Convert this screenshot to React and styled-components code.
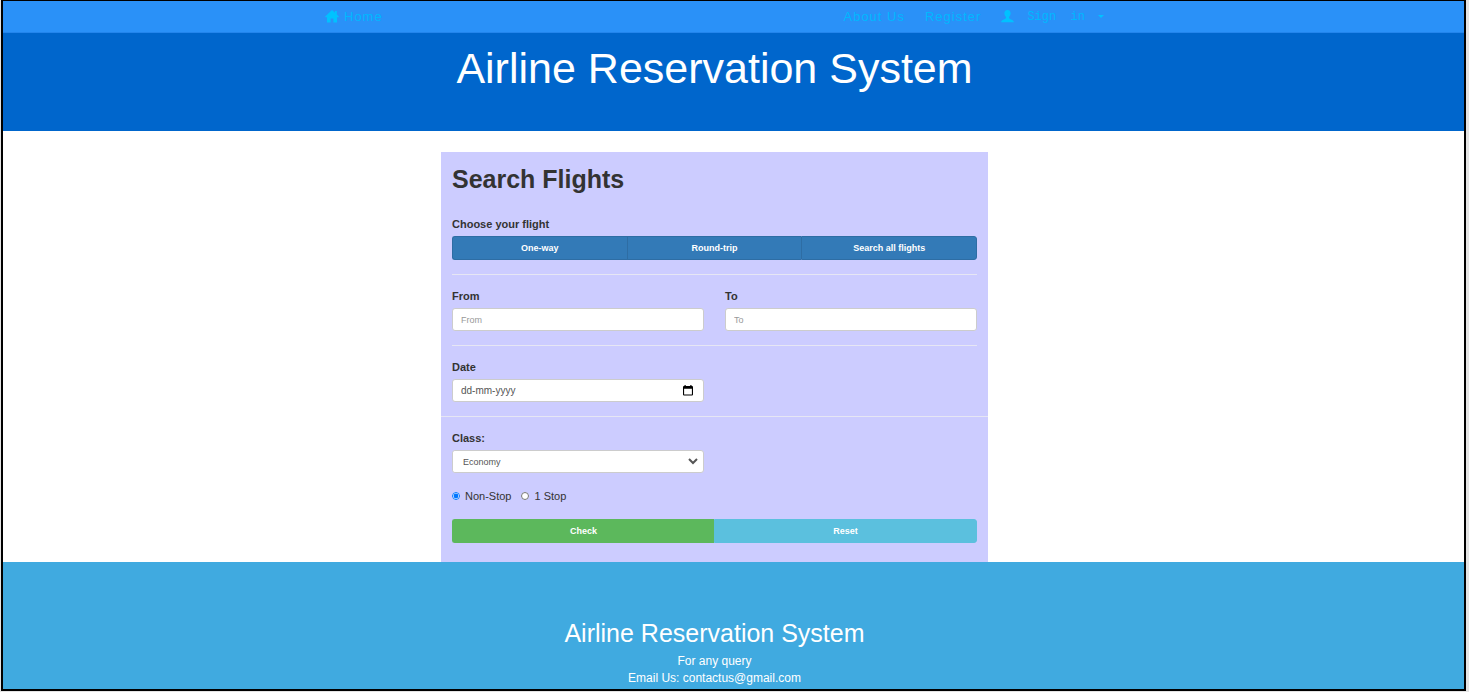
import React from "react";
import styled, { createGlobalStyle } from "styled-components";

const GlobalStyle = createGlobalStyle`
  *, *::before, *::after { box-sizing: border-box; }
  body {
    margin: 0;
    background: #e4e4e4;
    color: #333;
    font-family: "Liberation Sans", Arial, Helvetica, sans-serif;
    font-size: 11px;
  }
  h1, h2, p, fieldset { margin: 0; padding: 0; border: 0; }
  button, input, select { font-family: inherit; margin: 0; }
`;

const Page = styled.div`
  display: flex;
  flex-direction: column;
  min-height: calc(100vh - 1px);
  margin: 0 3px 1px 1px;
  border: 2px solid #000;
  border-top-width: 1px;
  background: #fff;
`;

const NavBar = styled.nav`
  padding-right: 38px;
  background: #2a91f8;
  border-bottom: 1px solid #2385ec;
`;

const NavInner = styled.div`
  display: flex;
  justify-content: space-between;
  max-width: 779px;
  margin: 0 auto;
`;

const NavGroup = styled.div`
  display: flex;
  gap: 20px;
`;

const NavLink = styled.a`
  display: flex;
  align-items: center;
  gap: 5px;
  height: 31px;
  color: #00b8ff;
  font-size: 13px;
  letter-spacing: 1px;
  text-decoration: none;
  svg { fill: #00c2ff; }
`;

const SignInLink = styled(NavLink)`
  gap: 13px;
  font-family: "Liberation Mono", monospace;
  font-size: 12px;
  letter-spacing: 0;
  white-space: pre;
`;

const Banner = styled.header`
  padding: 11px 38px 39px 0;
  background: #0066cc;
  color: #fff;
  text-align: center;
`;

const BannerTitle = styled.h1`
  font-size: 43px;
  font-weight: 400;
  line-height: 48px;
`;

const Main = styled.main`
  padding: 21px 38px 0 0;
`;

const SearchForm = styled.form`
  max-width: 547px;
  margin: 0 auto;
  padding: 13px 0 19px;
  background: #ccccff;
`;

const FormTitle = styled.h2`
  padding: 0 11px;
  margin-bottom: 10px;
  font-size: 25px;
  line-height: 28px;
`;

const Section = styled.div`
  padding: 14px 11px;
`;

const Divider = styled.hr`
  height: 1px;
  margin: ${(p) => (p.$full ? "0" : "0 11px")};
  border: 0;
  background: #e6e6f4;
`;

const Columns = styled.div`
  display: grid;
  grid-template-columns: 1fr 1fr;
  column-gap: 21px;
`;

const Label = styled.label`
  display: block;
  margin-bottom: 5px;
  font-size: 11px;
  font-weight: 700;
  line-height: 14px;
`;

const ButtonGroup = styled.div`
  display: flex;
`;

const tones = {
  primary: ["#337ab7", "#2e6da4"],
  success: ["#5cb85c", "#5cb85c"],
  info: ["#5bc0de", "#5bc0de"],
};

const GroupButton = styled.button`
  flex: 1 1 0;
  height: 24px;
  padding: 0 4px;
  border: 1px solid ${(p) => tones[p.$tone][1]};
  background: ${(p) => tones[p.$tone][0]};
  color: #fff;
  font-size: 9px;
  font-weight: 700;
  &:first-child { border-radius: 3px 0 0 3px; }
  &:last-child { border-radius: 0 3px 3px 0; }
  &:not(:last-child) { border-right-width: 0; }
`;

const Control = styled.div`
  display: flex;
  align-items: center;
  height: 23px;
  border: 1px solid #ccc;
  border-radius: 3px;
  background: #fff;
`;

const TextInput = styled.input`
  flex: 1;
  min-width: 0;
  height: 100%;
  padding: 0 8px;
  border: 0;
  background: none;
  color: #555;
  font-size: ${(p) => (p.$date ? "10px" : "9px")};
  outline: 0;
  &::placeholder { color: ${(p) => (p.$date ? "#555" : "#999")}; opacity: 1; }
`;

const PickerButton = styled.button`
  display: flex;
  padding: 0 10px;
  border: 0;
  background: none;
`;

const SelectControl = styled(Control)`
  padding-right: 2px;
`;

const ClassSelect = styled.select`
  flex: 1;
  min-width: 0;
  height: 100%;
  padding: 0 0 0 6px;
  border: 0;
  border-radius: 3px;
  background: #fff;
  color: #555;
  font-size: 9px;
`;

const RadioRow = styled.fieldset`
  display: flex;
  gap: 10px;
  margin: 15px 0;
`;

const RadioLabel = styled.label`
  display: flex;
  align-items: center;
  gap: 5px;
  line-height: 16px;
  input { width: 8px; height: 8px; }
`;

const LastSection = styled(Section)`
  padding-bottom: 0;
`;

const Footer = styled.footer`
  flex: 1;
  padding: 57px 38px 1px 0;
  background: #40aae0;
  color: #fff;
  text-align: center;
  font-size: 12px;
  line-height: 17px;
`;

const FooterTitle = styled.h2`
  margin-bottom: 6px;
  font-size: 25px;
  font-weight: 400;
  line-height: 28px;
`;

const HomeIcon = () => (
  <svg width="14" height="13" viewBox="0 0 14 13" aria-hidden="true">
    <path d="M7 0 L10 2.8 V1 H11.8 V4.5 L14 6.7 L13.6 7.2 H12 V12.4 H8.4 V8.6 H5.6 V12.4 H2 V7.2 H0.4 L0 6.7 Z" />
  </svg>
);

const UserIcon = () => (
  <svg width="13" height="13" viewBox="0 0 13 13" aria-hidden="true">
    <path d="M6.5 0 C8.6 0 9.8 1.5 9.6 3.6 C9.5 5.2 8.9 6.3 8 7 C7.9 8.2 8.2 8.7 9.4 9.2 C11.6 10 12.8 10.4 12.9 12.3 H0.1 C0.2 10.4 1.4 10 3.6 9.2 C4.8 8.7 5.1 8.2 5 7 C4.1 6.3 3.5 5.2 3.4 3.6 C3.2 1.5 4.4 0 6.5 0 Z" />
  </svg>
);

const Caret = () => (
  <svg width="6" height="3" viewBox="0 0 6 3" aria-hidden="true">
    <path d="M0 0 H6 L3 3 Z" />
  </svg>
);

const CalendarIcon = () => (
  <svg width="10" height="11" viewBox="0 0 10 11" aria-hidden="true">
    <path
      fill="#000"
      fillRule="evenodd"
      d="M1.5 0 H2.7 V1 H7.3 V0 H8.5 V1 H9 Q10 1 10 2 V9.6 Q10 10.6 9 10.6 H1 Q0 10.6 0 9.6 V2 Q0 1 1 1 H1.5 Z M1.1 3.8 V9.5 H8.9 V3.8 Z"
    />
  </svg>
);

export default function App() {
  return (
    <Page>
      <GlobalStyle />
      <NavBar>
        <NavInner>
          <NavLink href="#home">
            <HomeIcon />
            Home
          </NavLink>
          <NavGroup>
            <NavLink href="#about">About Us</NavLink>
            <NavLink href="#register">Register</NavLink>
            <SignInLink href="#signin">
              <UserIcon />
              <span>{"Sign  in"}</span>
              <Caret />
            </SignInLink>
          </NavGroup>
        </NavInner>
      </NavBar>
      <Banner>
        <BannerTitle>Airline Reservation System</BannerTitle>
      </Banner>
      <Main>
        <SearchForm onSubmit={(e) => e.preventDefault()}>
          <FormTitle>Search Flights</FormTitle>
          <Section>
            <Label as="div" id="trip">Choose your flight</Label>
            <ButtonGroup role="group" aria-labelledby="trip">
              <GroupButton type="button" $tone="primary">One-way</GroupButton>
              <GroupButton type="button" $tone="primary">Round-trip</GroupButton>
              <GroupButton type="button" $tone="primary">Search all flights</GroupButton>
            </ButtonGroup>
          </Section>
          <Divider />
          <Section>
            <Columns>
              <div>
                <Label htmlFor="from">From</Label>
                <Control><TextInput id="from" placeholder="From" /></Control>
              </div>
              <div>
                <Label htmlFor="to">To</Label>
                <Control><TextInput id="to" placeholder="To" /></Control>
              </div>
            </Columns>
          </Section>
          <Divider />
          <Section>
            <Columns>
              <div>
                <Label htmlFor="date">Date</Label>
                <Control>
                  <TextInput id="date" placeholder="dd-mm-yyyy" $date />
                  <PickerButton type="button" aria-label="Open calendar">
                    <CalendarIcon />
                  </PickerButton>
                </Control>
              </div>
            </Columns>
          </Section>
          <Divider $full />
          <LastSection>
            <Columns>
              <div>
                <Label htmlFor="class">Class:</Label>
                <SelectControl>
                  <ClassSelect id="class" defaultValue="Economy">
                    <option>Economy</option>
                    <option>Business</option>
                  </ClassSelect>
                </SelectControl>
              </div>
            </Columns>
            <RadioRow>
              <RadioLabel>
                <input type="radio" name="stops" defaultChecked />
                Non-Stop
              </RadioLabel>
              <RadioLabel>
                <input type="radio" name="stops" />
                1 Stop
              </RadioLabel>
            </RadioRow>
            <ButtonGroup>
              <GroupButton type="submit" $tone="success">Check</GroupButton>
              <GroupButton type="reset" $tone="info">Reset</GroupButton>
            </ButtonGroup>
          </LastSection>
        </SearchForm>
      </Main>
      <Footer>
        <FooterTitle>Airline Reservation System</FooterTitle>
        <p>For any query</p>
        <p>Email Us: contactus@gmail.com</p>
      </Footer>
    </Page>
  );
}
